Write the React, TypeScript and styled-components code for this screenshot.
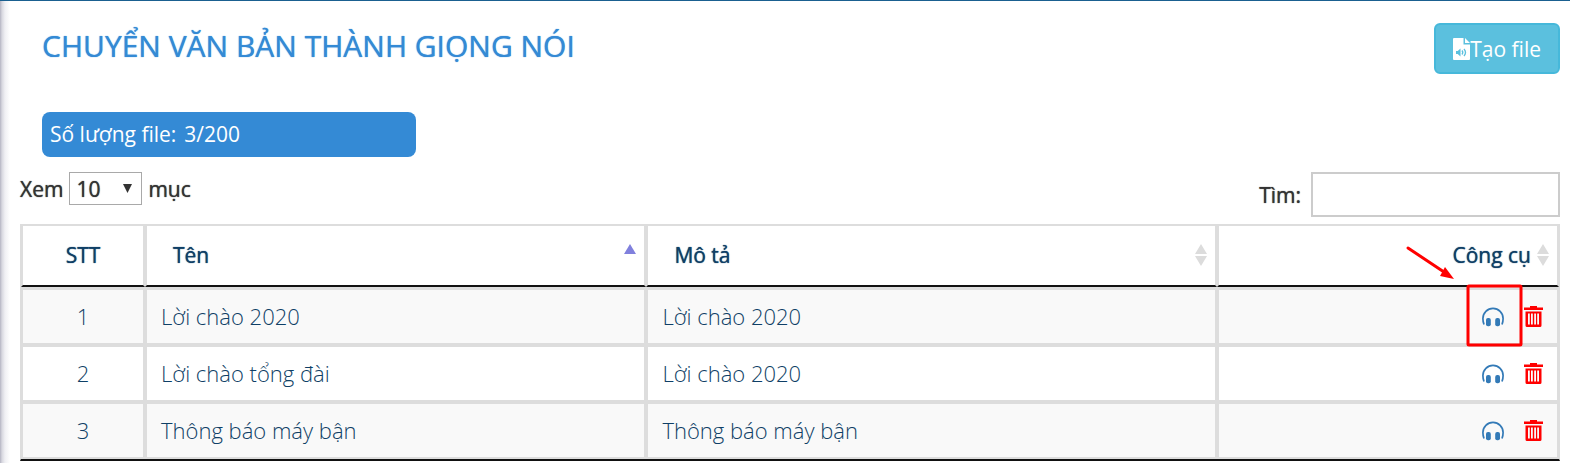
import React from 'react';
import styled, { createGlobalStyle, css } from 'styled-components';

const GlobalStyle = createGlobalStyle`
  *, *::before, *::after { box-sizing: border-box; }
  body {
    margin: 0;
    background: #fff;
    color: #333;
    font-family: 'Open Sans', 'Noto Sans', sans-serif;
    font-size: 21px;
    line-height: 30px;
  }
`;

/* a weight between regular and semibold */
const emphasised = css`
  font-weight: 400;
  text-shadow: 0 0 1px currentColor;
`;

const Page = styled.main`
  min-height: 100vh;
  padding: 22px 10px 2px 20px;
  border-top: 1px solid #1a6090;
  background: linear-gradient(to right, #b4b4c2 0, #d8d8e0 2px, #f0f0f4 5px, #fff 10px);
`;

const Header = styled.header`
  display: flex;
  align-items: flex-start;
  justify-content: space-between;
  padding-left: 22px;
`;

const Title = styled.h1`
  margin: 0;
  color: #348ad5;
  font-size: 30px;
  line-height: 46px;
  ${emphasised}
`;

const CreateButton = styled.button`
  display: flex;
  align-items: center;
  height: 51px;
  padding: 0 17px;
  border: 2px solid #46b8da;
  border-radius: 6px;
  background: #5bc0de;
  color: #fff;
  font: inherit;
`;

const Quota = styled.p`
  display: flex;
  gap: 8px;
  width: 374px;
  max-width: 100%;
  margin: 38px 0 15px 22px;
  padding: 7px 8px 8px;
  border-radius: 8px;
  background: #348ad5;
  color: #fff;
`;

const Controls = styled.div`
  display: flex;
  align-items: flex-start;
  justify-content: space-between;
  margin-bottom: 7px;
  ${emphasised}
`;

const LengthLabel = styled.label`
  display: flex;
  align-items: center;
  gap: 6px;
`;

const SelectWrap = styled.span`
  position: relative;
  display: block;

  svg {
    position: absolute;
    top: 12px;
    right: 10px;
    pointer-events: none;
  }
`;

const LengthSelect = styled.select`
  display: block;
  width: 73px;
  height: 33px;
  padding: 0 6px;
  border: 1px solid #a9a9a9;
  border-radius: 0;
  appearance: none;
  background: #fff;
  color: #333;
  font: inherit;
  text-shadow: inherit;
`;

const SearchLabel = styled.label`
  display: flex;
  align-items: center;
  gap: 10px;
`;

const SearchInput = styled.input`
  width: 249px;
  height: 45px;
  padding: 0 8px;
  border: 2px solid #ccc;
  background: #fff;
  font: inherit;
`;

const Table = styled.table`
  width: 100%;
  table-layout: fixed;
  border-spacing: 0;
  border: solid #ddd;
  border-width: 0 1px;
  border-bottom: 2px solid #111;
  color: #0f3f66;
`;

const Th = styled.th<{ $width?: string; $align?: string }>`
  position: relative;
  width: ${(p) => p.$width ?? 'auto'};
  height: 63px;
  padding: 0 26px 2px;
  border: 2px solid #ddd;
  border-bottom-color: #111;
  ${emphasised}
  text-align: ${(p) => p.$align ?? 'left'};
`;

const SortIcon = styled.svg`
  position: absolute;
  top: 17px;
  right: 7px;
`;

const Row = styled.tr`
  background: #fff;
  &:nth-child(odd) { background: #f9f9f9; }
  &:first-child td { height: 58px; border-top-width: 3px; }
`;

const Td = styled.td<{ $align?: string }>`
  height: 57px;
  padding: 0 14px 2px;
  border: 2px solid #ddd;
  font-size: 22px;
  font-weight: 300;
  text-align: ${(p) => p.$align ?? 'left'};
`;

const Actions = styled.div`
  position: relative;
  display: flex;
  justify-content: flex-end;
  gap: 20px;
  padding-top: 2px;
`;

const IconButton = styled.button<{ $color: string }>`
  display: block;
  padding: 0;
  border: 0;
  background: none;
  color: ${(p) => p.$color};

  svg { display: block; }
`;

const Callout = styled.svg`
  position: absolute;
  top: -59px;
  right: 19px;
  pointer-events: none;
`;

const FileAudioIcon = () => (
  <svg width="17" height="22" viewBox="0 0 17 22" aria-hidden="true">
    <path fill="#fff" d="M1 0h9.500v6.500h6.500V21a1 1 0 0 1-1 1H1a1 1 0 0 1-1-1V1a1 1 0 0 1 1-1zM12 0l5 5h-5z" />
    <path fill="#5bc0de" d="M3 13h1.700l2.800-2.500v8L4.700 16H3z" />
    <path fill="none" stroke="#5bc0de" strokeWidth="1.300" d="M9 12.500q1.600 2 0 4M11 11q3 3.500 0 7" />
  </svg>
);

const HeadphonesIcon = () => (
  <svg width="22" height="20" viewBox="0 0 22 20" aria-hidden="true">
    <path fill="none" stroke="currentColor" strokeWidth="1.700" d="M2 17.500C1.200 15.500.9 13.500.9 11.500a10.100 10.100 0 0 1 20.200 0c0 2-.3 4-1.100 6" />
    <rect x="4" y="11" width="4.800" height="8.300" rx="2" fill="currentColor" />
    <rect x="13.200" y="11" width="4.800" height="8.300" rx="2" fill="currentColor" />
  </svg>
);

const TrashIcon = () => (
  <svg width="19" height="22" viewBox="0 0 19 22" aria-hidden="true">
    <path
      fill="currentColor"
      fillRule="evenodd"
      d="M6 0h7v1.500h6v2.500H0V1.500h6zM1.500 5.500h16v14a1.500 1.500 0 0 1-1.500 1.500H3A1.500 1.500 0 0 1 1.500 19.500zM4 7.500v11h1.800v-11zM7 7.500v11h1.800v-11zM10.200 7.500v11h1.800v-11zM13.200 7.500v11h1.800v-11z"
    />
  </svg>
);

const SortBoth = () => (
  <SortIcon width="14" height="24" viewBox="0 0 14 24" aria-hidden="true">
    <path fill="#dcdcdc" d="M7 1l6 10H1zM7 23l6-10H1z" />
  </SortIcon>
);

const SortAsc = () => (
  <SortIcon width="14" height="24" viewBox="0 0 14 24" aria-hidden="true">
    <path fill="#8080dd" d="M7 1l6 10H1z" />
  </SortIcon>
);

const files = [
  { id: 1, name: 'Lời chào 2020', description: 'Lời chào 2020', highlighted: true },
  { id: 2, name: 'Lời chào tổng đài', description: 'Lời chào 2020' },
  { id: 3, name: 'Thông báo máy bận', description: 'Thông báo máy bận' },
];

export default function App() {
  return (
    <>
      <GlobalStyle />
      <Page>
        <Header>
          <Title>CHUYỂN VĂN BẢN THÀNH GIỌNG NÓI</Title>
          <CreateButton type="button"><FileAudioIcon />Tạo file</CreateButton>
        </Header>
        <Quota><span>Số lượng file:</span><span>3/200</span></Quota>
        <Controls>
          <LengthLabel>
            Xem
            <SelectWrap>
              <LengthSelect defaultValue="10">
                <option>10</option>
                <option>25</option>
                <option>50</option>
              </LengthSelect>
              <svg width="9" height="9" viewBox="0 0 9 9" aria-hidden="true">
                <path fill="#333" d="M0 0h9L4.500 9z" />
              </svg>
            </SelectWrap>
            mục
          </LengthLabel>
          <SearchLabel>
            Tìm:
            <SearchInput type="search" />
          </SearchLabel>
        </Controls>
        <Table>
          <thead>
            <tr>
              <Th $width="124px" $align="center">STT</Th>
              <Th $width="32.600%">Tên<SortAsc /></Th>
              <Th $width="37.100%">Mô tả<SortBoth /></Th>
              <Th $align="right">Công cụ<SortBoth /></Th>
            </tr>
          </thead>
          <tbody>
            {files.map((file) => (
              <Row key={file.id}>
                <Td $align="center">{file.id}</Td>
                <Td>{file.name}</Td>
                <Td>{file.description}</Td>
                <Td>
                  <Actions>
                    <IconButton type="button" aria-label="Nghe" $color="#337ab7"><HeadphonesIcon /></IconButton>
                    <IconButton type="button" aria-label="Xóa" $color="#f00"><TrashIcon /></IconButton>
                    {file.highlighted && (
                      <Callout width="120" height="102" viewBox="0 0 120 102" aria-hidden="true">
                        <rect x="64" y="41" width="53" height="59" rx="1" fill="none" stroke="#f00" strokeWidth="3" />
                        <path d="M4 3l36 24" stroke="#f00" strokeWidth="3" strokeLinecap="round" />
                        <path d="M50 34l-14-3 5-9z" fill="#f00" />
                      </Callout>
                    )}
                  </Actions>
                </Td>
              </Row>
            ))}
          </tbody>
        </Table>
      </Page>
    </>
  );
}
